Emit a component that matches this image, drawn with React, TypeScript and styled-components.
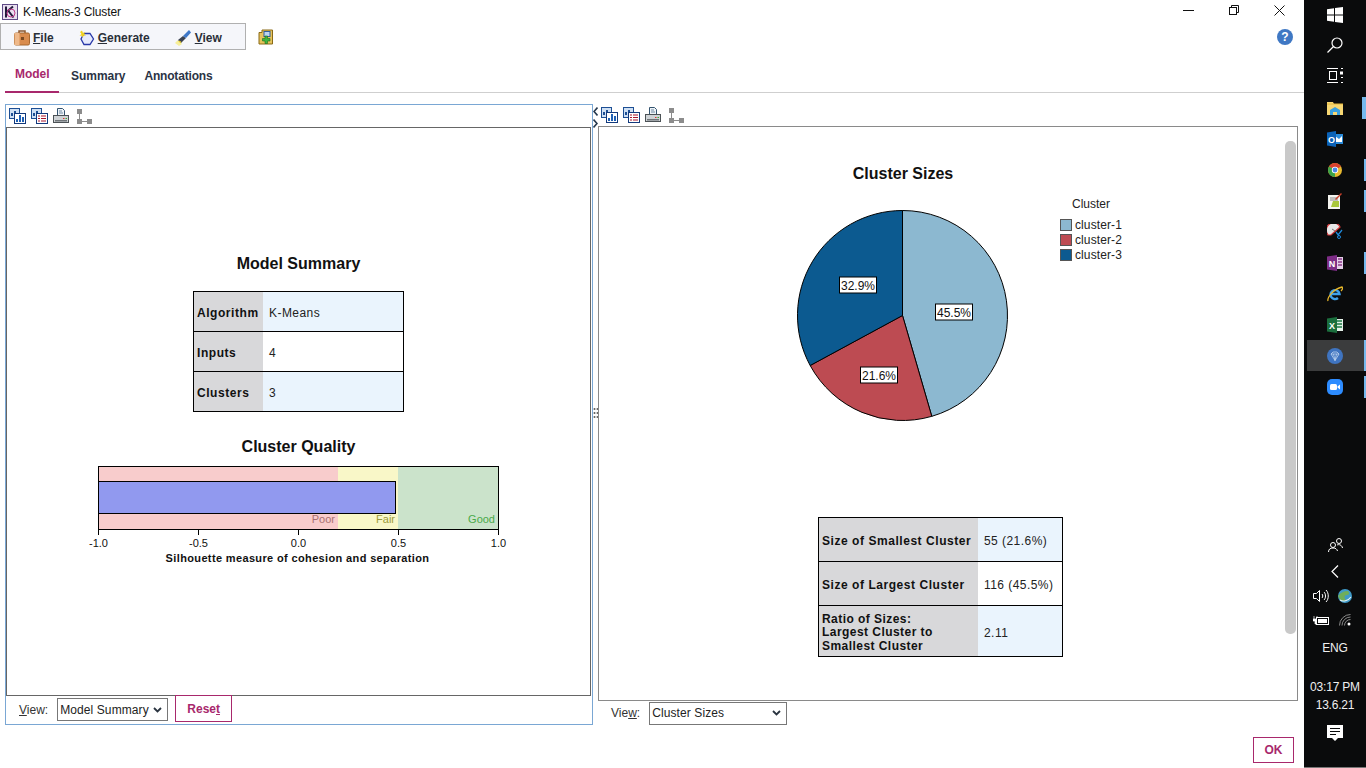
import { ReactNode } from "react";
import styled, { createGlobalStyle } from "styled-components";

const GlobalStyle = createGlobalStyle`
  html, body {
    margin: 0;
    padding: 0;
    background: #fff;
    overflow: hidden;
  }
  * {
    box-sizing: border-box;
  }
`;

const Screen = styled.div`
  width: 1366px;
  height: 768px;
  display: flex;
  font-family: "Liberation Sans", Arial, sans-serif;
  color: #111;
  overflow: hidden;
`;
const Window = styled.div`
  width: 1304px;
  height: 768px;
  display: flex;
  flex-direction: column;
`;

/* title bar */
const TitleBar = styled.div`
  height: 23px;
  display: flex;
  align-items: center;
  padding-left: 2px;
  font-size: 12px;
  letter-spacing: -0.13px;
`;
const TitleText = styled.span`
  margin-left: 5px;
  flex: 1;
`;
const WinButtons = styled.div`
  display: flex;
  align-items: center;
  align-self: flex-start;
  height: 20px;
  gap: 35px;
  padding-right: 19px;
`;

/* menu row */
const ToolRow = styled.div`
  height: 27px;
  display: flex;
  align-items: center;
  padding-right: 11px;
`;
const MenuBox = styled.div`
  width: 246px;
  height: 27px;
  background: #f5f6fa;
  border: 1px solid #b0b0b0;
  display: flex;
  align-items: center;
  padding: 2px 0 0 13px;
  gap: 25px;
`;
const MenuItem = styled.div`
  display: flex;
  align-items: center;
  gap: 3px;
  font-size: 12px;
  font-weight: bold;
  color: #2a2f38;
`;
const ExtraButton = styled.div`
  margin-left: 12px;
  flex: 1;
  display: flex;
`;

/* tabs */
const TabBar = styled.div`
  height: 31px;
  margin: 12px 0 0 5px;
  display: flex;
  border-bottom: 1px solid #cfcfcf;
`;
const Tab = styled.div<{ $active?: boolean; $tight?: boolean }>`
  height: 31px;
  padding: ${(p) => (p.$active ? "5px 10px 0 10px" : "7px 10px 0 9px")};
  margin-right: ${(p) => (p.$active ? "3px" : "0")};
  width: ${(p) => (p.$active ? "54px" : "auto")};
  font-size: 12px;
  font-weight: bold;
  letter-spacing: ${(p) => (p.$tight ? "-0.18px" : "-0.04px")};
  color: ${(p) => (p.$active ? "#a8286c" : "#2b3445")};
  border-bottom: ${(p) => (p.$active ? "2px solid #a8286c" : "none")};
`;

/* panels */
const Panels = styled.div`
  height: 621px;
  margin: 11px 0 0 5px;
  display: flex;
`;
const LeftPanel = styled.div`
  width: 588px;
  display: flex;
  flex-direction: column;
  border: 1px solid #7aa7d4;
`;
const RightPanel = styled.div`
  width: 700px;
  display: flex;
  flex-direction: column;
`;
const IconBar = styled.div`
  height: 22px;
  display: flex;
  align-items: center;
  padding-left: 3px;
  gap: 5px;
  flex: none;
`;
const LeftPane = styled.div`
  height: 569px;
  margin-right: 1px;
  border: 1px solid #666;
  display: flex;
  flex-direction: column;
  align-items: center;
  padding-top: 127px;
`;
const RightPane = styled.div`
  position: relative;
  height: 575px;
  border: 1px solid #8a8a8a;
  padding: 38px 0 0 198px;
`;
const ScrollThumb = styled.div`
  position: absolute;
  top: 14px;
  right: 1px;
  width: 11px;
  height: 493px;
  border-radius: 5px;
  background: #c9c9c9;
`;
const Splitter = styled.div`
  width: 5px;
  display: flex;
  flex-direction: column;
  align-items: center;
  padding-top: 3px;
`;
const Grip = styled.div`
  margin-top: 276px;
  width: 5px;
  height: 13px;
  background-image: radial-gradient(#666 1px, transparent 1.1px);
  background-size: 3px 4px;
`;

const ChartTitle = styled.div<{ $top?: number }>`
  font-size: 16px;
  font-weight: bold;
  text-align: center;
  margin-top: ${(p) => p.$top ?? 0}px;
`;

/* tables */
const InfoTable = styled.div<{ $label: number; $value: number; $top: number; $left?: number }>`
  display: grid;
  grid-template-columns: ${(p) => p.$label}px ${(p) => p.$value}px;
  width: ${(p) => p.$label + p.$value + 2}px;
  margin-top: ${(p) => p.$top}px;
  margin-left: ${(p) => p.$left ?? 0}px;
  border: 1px solid #000;
  font-size: 12px;
`;
const LabelCell = styled.div<{ $height: number; $last?: boolean; $wrap?: boolean }>`
  height: ${(p) => p.$height}px;
  background: #d8d8da;
  display: flex;
  align-items: center;
  padding: 4px 0 0 3px;
  font-weight: bold;
  letter-spacing: ${(p) => (p.$wrap ? "0.45px" : "0.55px")};
  line-height: 13.5px;
  border-bottom: ${(p) => (p.$last ? "none" : "1px solid #000")};
`;
const ValueCell = styled.div<{ $height: number; $last?: boolean; $plain?: boolean }>`
  height: ${(p) => p.$height}px;
  background: ${(p) => (p.$plain ? "#fff" : "#eaf4fd")};
  display: flex;
  align-items: center;
  padding: 3px 0 0 6px;
  letter-spacing: 0.45px;
  color: #222;
  border-bottom: ${(p) => (p.$last ? "none" : "1px solid #000")};
`;

/* pie + legend */
const PieRow = styled.div`
  display: flex;
`;
const PieColumn = styled.div`
  width: 212px;
  display: flex;
  flex-direction: column;
`;
const PieFrame = styled.div`
  margin-top: 27px;
  height: 212px;
`;
const Legend = styled.div`
  margin: 32px 0 0 51px;
  font-size: 12px;
  color: #222;
`;
const LegendTitle = styled.div`
  margin: 0 0 6px 12px;
  line-height: 14px;
`;
const LegendItem = styled.div`
  height: 15px;
  display: flex;
  align-items: center;
  gap: 3px;
  letter-spacing: 0.1px;
`;
const Swatch = styled.span<{ $color: string }>`
  width: 12px;
  height: 12px;
  background: ${(p) => p.$color};
  border: 1px solid #555;
`;

/* footers */
const Footer = styled.div<{ $left: number; $height: number }>`
  height: ${(p) => p.$height}px;
  display: flex;
  align-items: center;
  padding-left: ${(p) => p.$left}px;
  gap: 9px;
  font-size: 12px;
  color: #333;
`;
const SelectBox = styled.div<{ $width: number }>`
  width: ${(p) => p.$width}px;
  height: 23px;
  border: 1px solid #777;
  background: #fff;
  display: flex;
  align-items: center;
  justify-content: space-between;
  padding: 0 5px 0 2px;
  color: #222;
  letter-spacing: 0.1px;
`;
const ResetButton = styled.div`
  width: 57px;
  height: 27px;
  margin: -2px 0 0 -2px;
  border: 1px solid #a8286c;
  background: #fff;
  color: #a8286c;
  font-weight: bold;
  display: flex;
  align-items: center;
  justify-content: center;
`;
const OkRow = styled.div`
  margin-top: 12px;
  display: flex;
  justify-content: flex-end;
  padding-right: 10px;
`;
const OkButton = styled.div`
  width: 41px;
  height: 26px;
  border: 1px solid #a8286c;
  color: #a8286c;
  font-size: 12px;
  font-weight: bold;
  display: flex;
  align-items: center;
  justify-content: center;
`;

/* taskbar */
const Taskbar = styled.div`
  width: 62px;
  height: 768px;
  background: #0a0b0c;
  color: #fff;
  display: flex;
  flex-direction: column;
`;
const TaskSlot = styled.div<{ $height?: number; $bar?: "open" | "wide"; $active?: boolean }>`
  position: relative;
  height: ${(p) => p.$height ?? 31}px;
  flex: none;
  display: flex;
  align-items: center;
  justify-content: center;
  margin-left: 3px;
  padding-right: 3px;
  background: ${(p) => (p.$active ? "#3b3c3d" : "transparent")};
  &::after {
    content: "";
    display: ${(p) => (p.$bar ? "block" : "none")};
    position: absolute;
    right: 0;
    top: ${(p) => (p.$active ? "0" : "5px")};
    bottom: ${(p) => (p.$active ? "0" : "4px")};
    width: ${(p) => (p.$bar === "wide" ? "4px" : "2px")};
    background: #76b9ed;
  }
`;
const AppSlots = styled.div`
  margin-top: 2px;
  display: flex;
  flex-direction: column;
`;
const Tray = styled.div`
  margin-top: auto;
  height: 236px;
  display: flex;
  flex-direction: column;
  align-items: center;
  border-bottom: 1px solid #777;
`;
const TrayRow = styled.div<{ $height: number; $shift?: number; $gap?: number }>`
  height: ${(p) => p.$height}px;
  display: flex;
  align-items: center;
  justify-content: center;
  gap: ${(p) => p.$gap ?? 9}px;
  padding-right: ${(p) => p.$shift ?? 0}px;
  flex: none;
`;
const TrayText = styled.div<{ $height: number; $top?: number }>`
  height: ${(p) => p.$height}px;
  line-height: ${(p) => p.$height}px;
  margin-top: ${(p) => p.$top ?? 0}px;
  font-size: 12px;
  letter-spacing: -0.2px;
  color: #f0f0f0;
  flex: none;
`;

/* icons */
const ChartIcon = () => (
  <svg width="17" height="16" viewBox="0 0 17 16">
    <rect x="0.5" y="0.5" width="10" height="10" fill="#cfe0f4" stroke="#1d4f94" />
    <path d="M2 8V5h2v3zM5 8V3h2v5z" fill="#1d4f94" />
    <rect x="5.5" y="5.5" width="11" height="10" fill="#fff" stroke="#12397c" />
    <path d="M7 14v-3h2v3zM10 14V7h2v7zM13 14V9h2v5z" fill="#1d5fb4" />
  </svg>
);
const TableIcon = () => (
  <svg width="17" height="16" viewBox="0 0 17 16">
    <rect x="0.5" y="0.5" width="10" height="10" fill="#cfe0f4" stroke="#1d4f94" />
    <path d="M2 8V5h2v3zM5 8V3h2v5z" fill="#1d4f94" />
    <rect x="5.5" y="5.5" width="11" height="10" fill="#fff" stroke="#12397c" />
    <path d="M7 7.5h2v1H7zM10 7.5h5v1h-5zM7 10h2v1H7zM10 10h5v1h-5zM7 12.5h2v1H7zM10 12.5h5v1h-5z" fill="#a8142c" />
  </svg>
);
const PrintIcon = () => (
  <svg width="16" height="16" viewBox="0 0 16 16">
    <path d="M4.5.5h5l2 2v5h-7z" fill="#eef3f8" stroke="#33536f" />
    <path d="M6 3h3M6 5h4" stroke="#6f8aa3" />
    <rect x="0.5" y="7.5" width="15" height="7" fill="#cfd3d6" stroke="#4c5256" />
    <rect x="2" y="12" width="12" height="1.5" fill="#6f7478" />
    <path d="M10 10h1.5v1H10z" fill="#d33" />
    <path d="M12.5 10H14v1h-1.5z" fill="#3a3" />
  </svg>
);
const TreeIcon = () => (
  <svg width="15" height="15" viewBox="0 0 15 15" style={{ marginLeft: 3 }}>
    <path d="M2.500 4v8.500H11" fill="none" stroke="#8c8c8c" />
    <path d="M0 0h5v5H0zM0 10h5v5H0zM10 10h5v5h-5z" fill="#8c8c8c" />
  </svg>
);
const IconSet = () => (
  <>
    <ChartIcon />
    <TableIcon />
    <PrintIcon />
    <TreeIcon />
  </>
);
const AppLogo = () => (
  <svg width="16" height="16" viewBox="0 0 16 16">
    <rect x="0.5" y="0.5" width="15" height="15" fill="#e9dff0" stroke="#5f4a86" />
    <path d="M4 2.5v11M4.5 8L11 2.5M6.5 7l5 6.5" stroke="#201a3a" strokeWidth="2" fill="none" />
    <circle cx="9" cy="9" r="4" fill="none" stroke="#c03a8a" />
  </svg>
);
const CaseIcon = () => (
  <svg width="16" height="17" viewBox="0 0 16 17">
    <path d="M5 4V2h6v2" fill="none" stroke="#8a5a32" strokeWidth="1.5" />
    <rect x="0.5" y="4" width="15" height="12" rx="1.5" fill="#d98c4e" stroke="#a8682f" />
    <rect x="0.5" y="4" width="5" height="12" fill="#efb98a" />
    <rect x="7" y="8" width="3" height="3" fill="#7a4a22" />
  </svg>
);
const GenerateIcon = () => (
  <svg width="16" height="16" viewBox="0 0 16 16">
    <path d="M5 3.5h6l3.5 5.5-3.5 5.5H5L2 9z" fill="#e6eafc" stroke="#2838a8" strokeWidth="1.3" />
    <path d="M3 0.5l1 2.5 2.5-1L5 4l2 1.5-2.7.3L3.5 8 3 5.7.5 5.5 2.5 4 1 2z" fill="#f2d21c" />
  </svg>
);
const TorchIcon = () => (
  <svg width="17" height="16" viewBox="0 0 17 16">
    <path d="M0 13l4 3 3-2-4-4z" fill="#f6ee9a" />
    <path d="M3 10l3 3 5-5-3-2z" fill="#3b4250" />
    <path d="M8 6l3 2 5-5.5L14 0z" fill="#3f78c8" />
    <path d="M4 11l2 1.5" stroke="#e8c92a" strokeWidth="1.5" />
  </svg>
);
const AddIcon = () => (
  <svg width="16" height="16" viewBox="0 0 16 16">
    <path d="M1 3.5h3V1h10.500v14H1z" fill="#e6c35c" stroke="#8a6a16" />
    <rect x="6" y="2.500" width="6" height="5" fill="#bcd4f0" stroke="#2f5f9f" />
    <path d="M7 7h2.500v2.500H12V12H9.500v2.500H7V12H4.500V9.500H7z" fill="#3fb53f" stroke="#1d6d1d" strokeWidth="0.6" />
  </svg>
);
const Chevron = () => (
  <svg width="9" height="6" viewBox="0 0 9 6">
    <path d="M1 1l3.500 3.500L8 1" fill="none" stroke="#2a3440" strokeWidth="1.8" />
  </svg>
);
const SplitArrow = ({ dir }: { dir: "left" | "right" }) => (
  <svg width="5" height="9" viewBox="0 0 5 9" style={{ marginBottom: 3 }}>
    <path d={dir === "left" ? "M4.500 .5L1 4.500l3.500 4" : "M.5 .5L4 4.500l-3.500 4"} fill="none" stroke="#26384d" strokeWidth="1.6" />
  </svg>
);
const HelpIcon = () => (
  <svg width="16" height="16" viewBox="0 0 16 16" style={{ marginLeft: "auto" }}>
    <circle cx="8" cy="8" r="8" fill="#3f78c4" />
    <text x="8" y="12.300" textAnchor="middle" fontSize="12" fontWeight="bold" fill="#fff" fontFamily="Liberation Sans">?</text>
  </svg>
);

const polar = (pct: number, r: number) => {
  const a = (pct / 100) * 2 * Math.PI;
  return [105.5 + r * Math.sin(a), 105.5 - r * Math.cos(a)];
};
const slice = (from: number, to: number) => {
  const [x1, y1] = polar(from, 105);
  const [x2, y2] = polar(to, 105);
  return `M105.5 105.5L${x1} ${y1}A105 105 0 ${to - from > 50 ? 1 : 0} 1 ${x2} ${y2}Z`;
};
const pieData = [
  { from: 0, to: 45.5, color: "#8cb8d0", label: "45.5%", x: 156.5, y: 102 },
  { from: 45.5, to: 67.1, color: "#bd4b52", label: "21.6%", x: 81.5, y: 165 },
  { from: 67.1, to: 100, color: "#0c5a90", label: "32.9%", x: 60.5, y: 75 },
];
const PieChart = () => (
  <svg width="212" height="212" viewBox="0 0 212 212">
    {pieData.map((s) => (
      <path key={s.label} d={slice(s.from, s.to)} fill={s.color} stroke="#000" />
    ))}
    {pieData.map((s) => (
      <g key={s.label + "t"}>
        <rect x={s.x - 18} y={s.y - 8} width="37" height="16" fill="#fff" stroke="#000" />
        <text x={s.x + 0.5} y={s.y + 4.5} textAnchor="middle" fontSize="12" fontFamily="Liberation Sans" fill="#111">
          {s.label}
        </text>
      </g>
    ))}
  </svg>
);

const QualityChart = () => (
  <svg width="420" height="104" viewBox="0 0 420 104" style={{ margin: "10px 0 0 -2px", flex: "none" }}>
    <g fontFamily="Liberation Sans" fontSize="11">
      <rect x="10" y="1" width="240" height="62" fill="#f8cccc" />
      <rect x="250" y="1" width="60" height="62" fill="#f9f7c8" />
      <rect x="310" y="1" width="100" height="62" fill="#cbe3cb" />
      <rect x="10.500" y="15.500" width="297" height="32" fill="#9199ef" stroke="#000" />
      <rect x="10.500" y="0.500" width="400" height="63" fill="none" stroke="#000" />
      <text x="247" y="57" textAnchor="end" fill="#a87070">Poor</text>
      <text x="307" y="57" textAnchor="end" fill="#9c9a3a">Fair</text>
      <text x="407" y="57" textAnchor="end" fill="#4aaa4a">Good</text>
      {[-1, -0.5, 0, 0.5, 1].map((v) => {
        const x = 10.5 + (v + 1) * 200;
        return (
          <g key={v}>
            <path d={`M${x} 63v6`} stroke="#000" />
            <text x={x} y="81" textAnchor="middle" fill="#111">{v.toFixed(1)}</text>
          </g>
        );
      })}
      <text x="209.500" y="96" textAnchor="middle" fontWeight="bold" letterSpacing="0.36" fill="#111">
        Silhouette measure of cohesion and separation
      </text>
    </g>
  </svg>
);

/* taskbar glyphs */
const WinLogo = () => (
  <svg width="16" height="16" viewBox="0 0 16 16">
    <path d="M0 2.300L7 1.300V7.500H0zM8 1.100L16 0V7.500H8zM0 8.500H7V14.700L0 13.700zM8 8.500H16V16L8 14.900z" fill="#fff" />
  </svg>
);
const SearchGlyph = () => (
  <svg width="16" height="16" viewBox="0 0 16 16">
    <circle cx="10" cy="6" r="5" fill="none" stroke="#fff" strokeWidth="1.200" />
    <path d="M6.500 9.500L.5 15.500" stroke="#fff" strokeWidth="1.300" />
  </svg>
);
const TaskViewGlyph = () => (
  <svg width="16" height="15" viewBox="0 0 16 15">
    <path d="M0 .5h11M0 14.500h11M14 .5h2M14 9.500h2M14 14.500h2" stroke="#fff" />
    <rect x="2.500" y="3.500" width="7" height="8" fill="none" stroke="#fff" />
    <rect x="13" y="3.500" width="3" height="3" fill="#fff" />
  </svg>
);
const ExplorerGlyph = () => (
  <svg width="16" height="14" viewBox="0 0 16 14">
    <path d="M0 1h6l1 2h9v11H0z" fill="#f7d774" />
    <path d="M0 3h16" stroke="#e6b83a" />
    <path d="M3 14V9l5-3 5 3v5h-3v-3H6v3z" fill="#3aa0e0" />
  </svg>
);
const OutlookGlyph = () => (
  <svg width="16" height="16" viewBox="0 0 16 16">
    <rect x="7" y="3" width="9" height="10" fill="#2a8ad8" />
    <path d="M8 5l4 3 3-3v6H8z" fill="#fff" />
    <path d="M0 1.500L9 0v16L0 14.500z" fill="#0a62b8" />
    <text x="4.500" y="11.500" textAnchor="middle" fontSize="9" fontWeight="bold" fill="#fff" fontFamily="Liberation Sans">O</text>
  </svg>
);
const ChromeGlyph = () => (
  <svg width="14" height="14" viewBox="0 0 14 14">
    <circle cx="7" cy="7" r="7" fill="#e8b92f" />
    <path d="M7 7L1 3.500A7 7 0 0 1 13 3.500z" fill="#d8412f" />
    <path d="M7 7L1 3.500A7 7 0 0 0 7 14z" fill="#3ba34a" />
    <circle cx="7" cy="7" r="3.200" fill="#fff" />
    <circle cx="7" cy="7" r="2.400" fill="#4a86e8" />
  </svg>
);
const NotesGlyph = () => (
  <svg width="14" height="16" viewBox="0 0 14 16">
    <rect x="0" y="2" width="12" height="14" fill="#f4f4f0" />
    <path d="M2 5h8M2 7h8" stroke="#888" />
    <path d="M3 14l2-6h6v6z" fill="#a9c83a" />
    <path d="M7 6l6-6 1 1-6 6z" fill="#c8402a" />
  </svg>
);
const SnipGlyph = () => (
  <svg width="16" height="15" viewBox="0 0 16 15">
    <path d="M0 9A7 7 0 0 1 13 3L4 11H1z" fill="#e8e8e8" stroke="#d2383a" strokeWidth="1.200" />
    <path d="M5 5l3 2" stroke="#777" />
    <path d="M9 8l3 4M15 6l-4 5" stroke="#1f88d8" strokeWidth="1.300" />
    <circle cx="12" cy="13" r="1.500" fill="none" stroke="#1f88d8" />
  </svg>
);
const OneNoteGlyph = () => (
  <svg width="16" height="16" viewBox="0 0 16 16">
    <rect x="8" y="2" width="8" height="12" fill="#e4cfe8" />
    <path d="M11 4h4M11 7h4M11 10h4" stroke="#8a3a8a" strokeWidth="1.500" />
    <path d="M0 1.500L10 0v16L0 14.500z" fill="#7d2d86" />
    <text x="5" y="11.500" textAnchor="middle" fontSize="9" fontWeight="bold" fill="#fff" fontFamily="Liberation Sans">N</text>
  </svg>
);
const IeGlyph = () => (
  <svg width="16" height="16" viewBox="0 0 16 16">
    <path d="M4 8h8.500A4.500 4.500 0 1 0 11 12" fill="none" stroke="#3fa0e8" strokeWidth="2.400" />
    <path d="M1 15C0 12 6 3 15 1c1 1 0 3-1 4" fill="none" stroke="#e8b82a" strokeWidth="1.300" />
  </svg>
);
const ExcelGlyph = () => (
  <svg width="16" height="16" viewBox="0 0 16 16">
    <rect x="8" y="2" width="8" height="12" fill="#e6f2ea" />
    <path d="M10 4h5M10 7h5M10 10h5" stroke="#1d7a44" strokeWidth="1.500" />
    <path d="M0 1.500L10 0v16L0 14.500z" fill="#1b6e3d" />
    <text x="5" y="11.500" textAnchor="middle" fontSize="9" fontWeight="bold" fill="#fff" fontFamily="Liberation Sans">X</text>
  </svg>
);
const DiamondGlyph = () => (
  <svg width="16" height="16" viewBox="0 0 16 16">
    <circle cx="8" cy="8" r="8" fill="#3f74c0" />
    <path d="M4 6l2-2h4l2 2-4 6.500zM4 6h8M6.500 6L8 12.500 9.500 6" fill="none" stroke="#bcd2ee" strokeWidth="0.8" />
  </svg>
);
const ZoomGlyph = () => (
  <svg width="16" height="16" viewBox="0 0 16 16">
    <rect width="16" height="16" rx="5" fill="#2d8cff" />
    <rect x="3" y="5" width="7" height="6" rx="1.500" fill="#fff" />
    <path d="M10.500 7.500L13 5.500v5l-2.500-2z" fill="#fff" />
  </svg>
);
const PeopleGlyph = () => (
  <svg width="15" height="14" viewBox="0 0 15 14">
    <g fill="none" stroke="#fff">
      <circle cx="5" cy="7" r="2.500" />
      <path d="M.5 14c0-3 2-4 4.500-4s4 1 4.500 3" />
      <circle cx="11" cy="3" r="2.500" />
      <path d="M9 7c2-1 5 0 5.500 3" />
    </g>
  </svg>
);
const BackGlyph = () => (
  <svg width="8" height="13" viewBox="0 0 8 13">
    <path d="M7 .5L1 6.500l6 6" fill="none" stroke="#fff" strokeWidth="1.200" />
  </svg>
);
const VolumeGlyph = () => (
  <svg width="16" height="14" viewBox="0 0 16 14">
    <path d="M.5 4.500h3l3-3v11l-3-3h-3z" fill="none" stroke="#fff" />
    <path d="M9 5c1 1 1 3 0 4M11 3c2 2 2 6 0 8M13 1c3 3 3 9 0 12" fill="none" stroke="#fff" />
  </svg>
);
const GlobeGlyph = () => (
  <svg width="14" height="14" viewBox="0 0 14 14">
    <circle cx="7" cy="7" r="7" fill="#3f9ac8" />
    <path d="M0 7c3-4 7-5 10-5 2 2 1 4-1 4-3 0-3 3-1 5-3 2-6 1-8-4z" fill="#6fae5a" />
    <path d="M2 11c3 2 8 1 11-3" fill="none" stroke="#e8f4f8" strokeWidth="1.200" />
  </svg>
);
const BatteryGlyph = () => (
  <svg width="16" height="11" viewBox="0 0 16 11">
    <path d="M1 1v3M4 1v3M0 4h5v2H3v3H2V6H0z" fill="#fff" stroke="#fff" strokeWidth="0.7" />
    <rect x="3.500" y="2.500" width="12" height="7" fill="#0a0b0c" stroke="#fff" />
    <rect x="5" y="4" width="9" height="4" fill="#fff" />
  </svg>
);
const WifiGlyph = () => (
  <svg width="12" height="12" viewBox="0 0 12 12">
    <path d="M.5 11.500A11 11 0 0 1 11.500 .5M3 11.500A8.500 8.500 0 0 1 11.500 3M5.500 11.500a6 6 0 0 1 6-6" fill="none" stroke="#8a8a8a" />
    <circle cx="10" cy="10" r="1.500" fill="#fff" />
  </svg>
);
const NoticeGlyph = () => (
  <svg width="16" height="16" viewBox="0 0 16 16">
    <path d="M0 0h16v13h-5l-3 3-3-3H0z" fill="#fff" />
    <path d="M3 3.500h10M3 6.500h10M3 9.500h6" stroke="#0a0b0c" />
  </svg>
);

const WinMin = () => (
  <svg width="11" height="11" viewBox="0 0 11 11">
    <path d="M0 5.500h11" stroke="#111" />
  </svg>
);
const WinRestore = () => (
  <svg width="10" height="10" viewBox="0 0 10 10">
    <rect x="0.500" y="2.500" width="7" height="7" fill="none" stroke="#111" />
    <path d="M2.500 2.500v-2h7v7h-2" fill="none" stroke="#111" />
  </svg>
);
const WinClose = () => (
  <svg width="11" height="11" viewBox="0 0 11 11">
    <path d="M.5 .5l10 10M10.500 .5l-10 10" stroke="#111" />
  </svg>
);

const appIcons: { icon: ReactNode; bar?: "open" | "wide"; active?: boolean }[] = [
  { icon: <ExplorerGlyph />, bar: "wide" },
  { icon: <OutlookGlyph /> },
  { icon: <ChromeGlyph />, bar: "open" },
  { icon: <NotesGlyph />, bar: "open" },
  { icon: <SnipGlyph /> },
  { icon: <OneNoteGlyph />, bar: "open" },
  { icon: <IeGlyph /> },
  { icon: <ExcelGlyph /> },
  { icon: <DiamondGlyph />, bar: "open", active: true },
  { icon: <ZoomGlyph />, bar: "open" },
];

const App = () => {
  return (
    <Screen>
      <GlobalStyle />
      <Window>
        <TitleBar>
          <AppLogo />
          <TitleText>K-Means-3 Cluster</TitleText>
          <WinButtons>
            <WinMin />
            <WinRestore />
            <WinClose />
          </WinButtons>
        </TitleBar>
        <ToolRow>
          <MenuBox>
            <MenuItem>
              <CaseIcon />
              <span><u>F</u>ile</span>
            </MenuItem>
            <MenuItem>
              <GenerateIcon />
              <span><u>G</u>enerate</span>
            </MenuItem>
            <MenuItem>
              <TorchIcon />
              <span><u>V</u>iew</span>
            </MenuItem>
          </MenuBox>
          <ExtraButton>
            <AddIcon />
          </ExtraButton>
          <HelpIcon />
        </ToolRow>
        <TabBar>
          <Tab $active>Model</Tab>
          <Tab>Summary</Tab>
          <Tab $tight>Annotations</Tab>
        </TabBar>
        <Panels>
          <LeftPanel>
            <IconBar>
              <IconSet />
            </IconBar>
            <LeftPane>
              <ChartTitle>Model Summary</ChartTitle>
              <InfoTable $label={69} $value={140} $top={18}>
                <LabelCell $height={40}>Algorithm</LabelCell>
                <ValueCell $height={40}>K-Means</ValueCell>
                <LabelCell $height={40}>Inputs</LabelCell>
                <ValueCell $height={40} $plain>4</ValueCell>
                <LabelCell $height={39} $last>Clusters</LabelCell>
                <ValueCell $height={39} $last>3</ValueCell>
              </InfoTable>
              <ChartTitle $top={26}>Cluster Quality</ChartTitle>
              <QualityChart />
            </LeftPane>
            <Footer $left={13} $height={27}>
              <span><u>V</u>iew:</span>
              <SelectBox $width={111}>
                Model Summary
                <Chevron />
              </SelectBox>
              <ResetButton>
                <span>Rese<u>t</u></span>
              </ResetButton>
            </Footer>
          </LeftPanel>
          <Splitter>
            <SplitArrow dir="left" />
            <SplitArrow dir="right" />
            <Grip />
          </Splitter>
          <RightPanel>
            <IconBar>
              <IconSet />
            </IconBar>
            <RightPane>
              <PieRow>
                <PieColumn>
                  <ChartTitle>Cluster Sizes</ChartTitle>
                  <PieFrame>
                    <PieChart />
                  </PieFrame>
                </PieColumn>
                <Legend>
                  <LegendTitle>Cluster</LegendTitle>
                  <LegendItem><Swatch $color="#8cb8d0" />cluster-1</LegendItem>
                  <LegendItem><Swatch $color="#bd4b52" />cluster-2</LegendItem>
                  <LegendItem><Swatch $color="#0c5a90" />cluster-3</LegendItem>
                </Legend>
              </PieRow>
              <InfoTable $label={159} $value={84} $top={95} $left={21}>
                <LabelCell $height={44}>Size of Smallest Cluster</LabelCell>
                <ValueCell $height={44}>55 (21.6%)</ValueCell>
                <LabelCell $height={44}>Size of Largest Cluster</LabelCell>
                <ValueCell $height={44} $plain>116 (45.5%)</ValueCell>
                <LabelCell $height={50} $last $wrap>
                  <span>Ratio of Sizes:<br />Largest Cluster to<br />Smallest Cluster</span>
                </LabelCell>
                <ValueCell $height={50} $last>2.11</ValueCell>
              </InfoTable>
              <ScrollThumb />
            </RightPane>
            <Footer $left={13} $height={24}>
              <span>Vie<u>w</u>:</span>
              <SelectBox $width={138}>
                Cluster Sizes
                <Chevron />
              </SelectBox>
            </Footer>
          </RightPanel>
        </Panels>
        <OkRow>
          <OkButton>OK</OkButton>
        </OkRow>
      </Window>
      <Taskbar>
        <TaskSlot $height={30}><WinLogo /></TaskSlot>
        <TaskSlot $height={30}><SearchGlyph /></TaskSlot>
        <TaskSlot $height={30}><TaskViewGlyph /></TaskSlot>
        <AppSlots>
          {appIcons.map((a, i) => (
            <TaskSlot key={i} $bar={a.bar} $active={a.active}>
              {a.icon}
            </TaskSlot>
          ))}
        </AppSlots>
        <Tray>
          <TrayRow $height={25}><PeopleGlyph /></TrayRow>
          <TrayRow $height={29}><BackGlyph /></TrayRow>
          <TrayRow $height={20} $shift={6}><VolumeGlyph /><GlobeGlyph /></TrayRow>
          <TrayRow $height={28} $shift={7} $gap={10}><BatteryGlyph /><WifiGlyph /></TrayRow>
          <TrayText $height={28}>ENG</TrayText>
          <TrayText $height={20} $top={15}>03:17 PM</TrayText>
          <TrayText $height={16}>13.6.21</TrayText>
          <TrayRow $height={39}><NoticeGlyph /></TrayRow>
        </Tray>
      </Taskbar>
    </Screen>
  );
};

export default App;
